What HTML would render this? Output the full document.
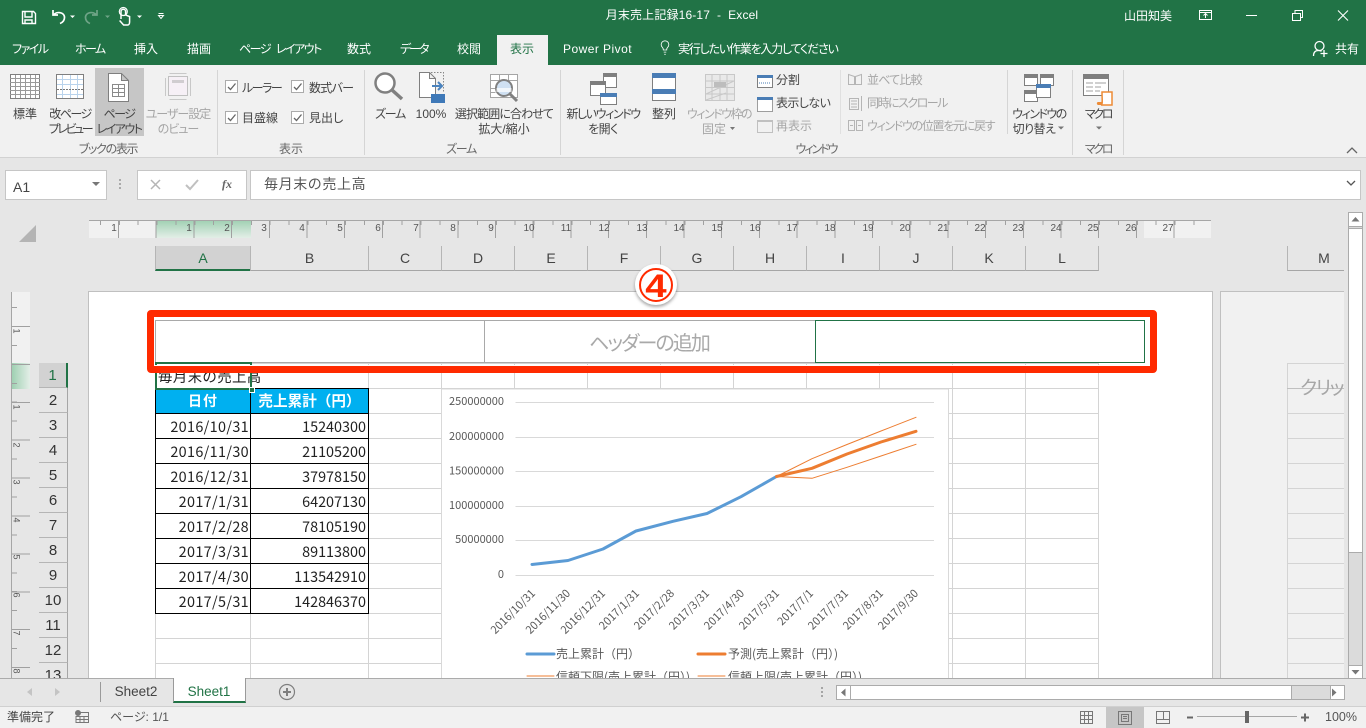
<!DOCTYPE html>
<html lang="ja"><head><meta charset="utf-8"><title>月末売上記録16-17 - Excel</title>
<style>
html,body{margin:0;padding:0;width:1366px;height:728px;overflow:hidden;background:#e6e6e6}
body{position:relative;font-family:"Liberation Sans","Noto Sans CJK JP",sans-serif;font-feature-settings:"palt";color:#444;font-size:12px}
div,span,svg{position:absolute}
.t{white-space:nowrap;line-height:14px;height:14px}
.c{transform:translateX(-50%)}
.w{color:#fff}.g{color:#a6a6a6}
.n{font-family:"Noto Sans CJK JP",sans-serif;font-feature-settings:normal;font-size:14.4px;color:#222;line-height:24px;height:24px;white-space:nowrap}
.d{letter-spacing:.35px}
.ch{top:246px;height:24px;border-bottom:1px solid #a6a6a6;border-left:1px solid #b5b5b5;text-align:center;line-height:24px;font-size:14px;color:#444;box-sizing:content-box}
.rh{left:39px;width:28px;height:24px;border-bottom:1px solid #b5b5b5;border-right:1px solid #a6a6a6;text-align:center;line-height:26px;font-size:15px;color:#333}
.rl{left:89px;top:223px;font-size:10px;color:#555;line-height:11px;transform:translateX(-50%)}
.vl{left:14px;font-size:9px;color:#555;line-height:10px;transform:rotate(90deg)}
</style></head><body>
<!-- title & tabs -->
<div style="left:0;top:0;width:1366px;height:65px;background:#217346"></div>
<div style="left:497px;top:35px;width:51px;height:30px;background:#f1f1f1"></div>
<div style="left:0;top:65px;width:1366px;height:92px;background:#f1f1f1"></div>
<div style="left:0;top:157px;width:1366px;height:1px;background:#d2d2d2"></div>
<div class="t w c" style="left:682px;top:8px;letter-spacing:.15px">月末売上記録16-17&nbsp;&nbsp;-&nbsp;&nbsp;Excel</div>
<div class="t w" style="left:1124px;top:9px">山田知美</div>
<div class="t w" style="left:12px;top:42px;letter-spacing:-1.5px">ファイル</div>
<div class="t w" style="left:75px;top:42px;letter-spacing:-1.6px">ホーム</div>
<div class="t w" style="left:134px;top:42px">挿入</div>
<div class="t w" style="left:187px;top:42px">描画</div>
<div class="t w" style="left:239px;top:42px;letter-spacing:-1.5px;word-spacing:4px">ページ レイアウト</div>
<div class="t w" style="left:347px;top:42px">数式</div>
<div class="t w" style="left:400px;top:42px;letter-spacing:-2px">データ</div>
<div class="t w" style="left:457px;top:42px">校閲</div>
<div class="t" style="left:510px;top:42px;color:#217346">表示</div>
<div class="t w" style="left:563px;top:42px;letter-spacing:.45px">Power Pivot</div>
<div class="t w" style="left:678px;top:42px;letter-spacing:-1.2px">実行したい作業を入力してください</div>
<div class="t w" style="left:1335px;top:42px">共有</div>
<svg style="left:0;top:0" width="1366" height="65" fill="none" stroke="#fff">
<path d="M22.5 11.5h11l2 2v10h-13zM25 12v5h7v-5M25 24v-4h7v4" stroke-width="1.4"/>
<path d="M53 10v5h5M53.5 15c3-4 11-3 11 2.5 0 3-2 5-4.5 6" stroke-width="1.7"/>
<path d="M70 15.5h5l-2.500 2.500z" fill="#fff" stroke="none"/>
<path d="M97 10v5h-5M96.500 15c-3-4-11-3-11 2.500 0 3 2 5 4.500 6" stroke="#6fa487" stroke-width="1.700"/>
<path d="M105 15.500h5l-2.500 2.500z" fill="#6fa487" stroke="none"/>
<path d="M121 19v-7.500a2.300 2.300 0 0 1 4.600 0V15l4 1.500V22c0 2-1 3-2 3h-4l-4-4.500" stroke-width="1.500"/><circle cx="123.300" cy="11.500" r="4" stroke-width="1.200"/>
<path d="M137 15.500h5l-2.500 2.500z" fill="#fff" stroke="none"/>
<path d="M158.500 13.500h5M158.500 15.500h5l-2.500 3z" stroke-width="1"/>
<rect x="1199.500" y="10.500" width="12" height="9"/><path d="M1199.500 12.500h12M1205.500 18v-4M1203.500 15.500l2-2 2 2"/>
<path d="M1246 15.500h11"/>
<path d="M1292.500 13.500h8v7h-8zM1295 13.500v-3h7.500v7h-2"/>
<path d="M1338 10.500l10 10M1348 10.500l-10 10" stroke-width="1.100"/>
<g transform="translate(0,3) translate(665,47) scale(.85) translate(-665,-47)"><path d="M668 44a4.500 4.500 0 1 0-6 0c1 1 1 2 1 3h4c0-1 0-2 1-3zM663.500 49.500h3M664 52h2" stroke-width="1"/></g>
<circle cx="1319.500" cy="46" r="4.500" stroke-width="1.300"/><path d="M1313.500 56c0-4 2-5.500 5-5.500 1 0 2 .2 3 .8M1320.500 53.500h7M1324 50v7" stroke-width="1.300"/>
</svg>

<!-- ribbon selected -->
<div style="left:95px;top:68px;width:49px;height:68px;background:#c6c6c6"></div>
<!-- ribbon separators -->
<div style="left:217px;top:70px;width:1px;height:85px;background:#d5d5d5"></div>
<div style="left:364px;top:70px;width:1px;height:85px;background:#d5d5d5"></div>
<div style="left:560px;top:70px;width:1px;height:85px;background:#d5d5d5"></div>
<div style="left:1007px;top:70px;width:1px;height:64px;background:#d5d5d5"></div>
<div style="left:840px;top:70px;width:1px;height:64px;background:#e0e0e0"></div>
<div style="left:1072px;top:70px;width:1px;height:85px;background:#d5d5d5"></div>
<div style="left:1123px;top:70px;width:1px;height:85px;background:#d5d5d5"></div>

<!-- ribbon labels -->
<div class="t c" style="left:25px;top:107px">標準</div>
<div class="t c" style="left:70px;top:107px;letter-spacing:-1.5px">改ページ</div><div class="t c" style="left:70px;top:122px;letter-spacing:-2.4px">プレビュー</div>
<div class="t c" style="left:119px;top:107px;letter-spacing:-1.5px">ページ</div><div class="t c" style="left:119px;top:122px;letter-spacing:-1.5px">レイアウト</div>
<div class="t c g" style="left:178px;top:107px;letter-spacing:-1px">ユーザー設定</div><div class="t c g" style="left:178px;top:122px;letter-spacing:-1px">のビュー</div>
<div class="t c" style="left:108px;top:142px;color:#666;letter-spacing:-1.3px">ブックの表示</div>
<div class="t" style="left:242px;top:81px;letter-spacing:-1.5px">ルーラー</div>
<div class="t" style="left:309px;top:81px;letter-spacing:-.7px">数式バー</div>
<div class="t" style="left:242px;top:111px">目盛線</div>
<div class="t" style="left:309px;top:111px">見出し</div>
<div class="t c" style="left:291px;top:142px;color:#666">表示</div>
<div class="t c" style="left:390px;top:107px;letter-spacing:-1.3px">ズーム</div>
<div class="t c" style="left:431px;top:107px">100%</div>
<div class="t c" style="left:504px;top:107px;letter-spacing:-.9px">選択範囲に合わせて</div><div class="t c" style="left:504px;top:122px">拡大/縮小</div>
<div class="t c" style="left:461px;top:142px;color:#666;letter-spacing:-1.3px">ズーム</div>
<div class="t c" style="left:603px;top:107px;letter-spacing:-1.4px">新しいウィンドウ</div><div class="t c" style="left:603px;top:122px;letter-spacing:-.5px">を開く</div>
<div class="t c" style="left:664px;top:107px">整列</div>
<div class="t c g" style="left:719px;top:107px;letter-spacing:-1.5px">ウィンドウ枠の</div><div class="t c g" style="left:714px;top:122px">固定</div>
<div class="t" style="left:776px;top:73px">分割</div>
<div class="t" style="left:776px;top:96px;letter-spacing:-.6px">表示しない</div>
<div class="t g" style="left:776px;top:119px">再表示</div>
<div class="t g" style="left:867px;top:73px;letter-spacing:-.8px">並べて比較</div>
<div class="t g" style="left:867px;top:96px;letter-spacing:-1.5px">同時にスクロール</div>
<div class="t g" style="left:867px;top:119px;letter-spacing:-1.3px">ウィンドウの位置を元に戻す</div>
<div class="t c" style="left:816px;top:142px;color:#666;letter-spacing:-2px">ウィンドウ</div>
<div class="t c" style="left:1039px;top:107px;letter-spacing:-1.5px">ウィンドウの</div><div class="t c" style="left:1034px;top:122px;letter-spacing:-.5px">切り替え</div>
<div class="t c" style="left:1098px;top:107px;letter-spacing:-2.300px">マクロ</div>
<div class="t c" style="left:1098px;top:142px;color:#666;letter-spacing:-2.300px">マクロ</div>

<!-- ribbon icons -->
<svg style="left:0;top:65px" width="1366" height="92" fill="none" stroke="#7f7f7f">
<g transform="translate(0,-65)">
<rect x="10.500" y="74.500" width="29" height="24" fill="#fff" stroke="#7f7f7f"/>
<path d="M10 78.500h30M10 82.500h30M10 86.500h30M10 90.500h30M10 94.500h30M15.500 75v23M20.500 75v23M25.500 75v23M30.500 75v23M35.500 75v23" stroke="#9a9a9a"/>
<rect x="56.500" y="74.500" width="27" height="24" fill="#fff"/>
<path d="M57 79.500h26M57 84.500h26M57 94.500h26M62.500 75v23M70.500 75v23M77.500 75v23" stroke="#b9d3ec"/>
<path d="M57 89.500h26" stroke="#777" stroke-dasharray="2 1"/>
<path d="M108.500 73.500h13l7 7v21h-20zM121.500 73.500v7h7" fill="#fff" stroke-width="1"/>
<path d="M112.500 84.500h12v12h-12zM112.500 88.500h12M112.500 92.500h12M118.500 84.500v12" stroke="#8a8a8a"/>
<path d="M169.500 73.500h17M165.500 78v18M190.500 78v18M169.500 99.500h17" stroke="#c8c8c8"/>
<rect x="168.500" y="76.500" width="19" height="19" fill="#f6f0f6" stroke="#c0c0c0"/>
<rect x="172" y="80" width="12" height="3" fill="#d0cdd0" stroke="none"/>
<g fill="#fff" stroke="#ababab"><rect x="225.500" y="80.500" width="12" height="12"/><rect x="291.500" y="80.500" width="12" height="12"/><rect x="225.500" y="111.500" width="12" height="12"/><rect x="291.500" y="111.500" width="12" height="12"/></g>
<g stroke="#666" stroke-width="1.300"><path d="M228 87l2.500 2.500 5-6M294 87l2.500 2.500 5-6M228 118l2.500 2.500 5-6M294 118l2.500 2.500 5-6"/></g>
<circle cx="385" cy="83" r="9.500" stroke="#808080" stroke-width="2.500" fill="#fff"/>
<path d="M392 90l10 9" stroke="#808080" stroke-width="3.500"/>
<path d="M419.500 72.500h10l6 6v19h-16zM429.500 72.500v6h6" fill="#fff" stroke="#7f7f7f"/>
<path d="M431 72.500h12.500v20" stroke="#888" stroke-dasharray="1.500 1.500"/>
<path d="M432 86h9M438 82l4 4-4 4" stroke="#4a82bd" stroke-width="2"/>
<rect x="431" y="94" width="14" height="9" fill="#3f79b8" stroke="none"/>
<path d="M490.500 74.500h27v23h-27zM490.500 80.500h27M499.500 75v10M508.500 75v6M490.500 88.500h7M490.500 92.500h5" stroke="#a5a5a5" fill="#fff"/>
<circle cx="504" cy="88" r="8" fill="#cfe0f2" stroke="#808080" stroke-width="2"/><path d="M496.500 88h15v4h-15z" fill="#fff" stroke="none" opacity=".7"/>
<path d="M510 94l7 7" stroke="#808080" stroke-width="3"/>
<g stroke="#7f7f7f"><rect x="603.500" y="73.500" width="13" height="14" fill="#fff"/><rect x="603" y="73" width="14" height="4" fill="#7f7f7f" stroke="none"/>
<rect x="590.500" y="81.500" width="15" height="14" fill="#fff"/><rect x="590" y="81" width="16" height="4" fill="#7f7f7f" stroke="none"/>
<rect x="600.500" y="93.500" width="16" height="11" fill="#fff"/><rect x="600" y="93" width="17" height="4" fill="#4a7db5" stroke="none"/></g>
<rect x="652.500" y="73.500" width="23" height="27" fill="#fff" stroke="#7f7f7f"/>
<rect x="652" y="73" width="24" height="5" fill="#4a7db5" stroke="none"/><rect x="652" y="89" width="24" height="5" fill="#4a7db5" stroke="none"/>
<rect x="705.500" y="74.500" width="29" height="26" fill="#e9e9e9" stroke="#c8c8c8"/>
<path d="M705 81h30M705 87.500h30M705 94h30M712 75v26M720 75v26M727 75v26M706 94l28-13M706 100l20-7" stroke="#c8c8c8"/>
<rect x="714" y="82" width="12" height="5" fill="#bdbdbd" stroke="none"/>
<rect x="757.500" y="75.500" width="15" height="12" fill="#fff" stroke="#7f7f7f"/><rect x="757" y="75" width="16" height="3" fill="#4a7db5" stroke="none"/><path d="M759 83h12" stroke="#4a7db5" stroke-dasharray="1 1"/>
<rect x="757.500" y="98.500" width="15" height="13" fill="#fff" stroke="#444" stroke-dasharray="1 1"/><rect x="757" y="97" width="16" height="3" fill="#4a7db5" stroke="none"/>
<rect x="757.500" y="120.500" width="15" height="12" fill="#f1f1f1" stroke="#c0c0c0"/><rect x="757" y="120" width="16" height="2" fill="#c0c0c0" stroke="none"/>
<g stroke="#b5b5b5"><path d="M848.500 74.500l6 2v8h-6zM855.500 76.500l6-2v10h-6z"/><path d="M849.500 98.500h9v11h-9zM851 101h6M851 104h6M851 107h6M861.500 96v15"/><path d="M848.500 120.500h6v10h-6zM856.500 120.500h6v10h-6zM850 125.500h3M858 125.500h3"/></g>
<g><rect x="1024.500" y="74.500" width="13" height="11" fill="#fff"/><rect x="1024" y="74" width="14" height="4" fill="#7f7f7f" stroke="none"/>
<rect x="1040.500" y="74.500" width="13" height="11" fill="#fff"/><rect x="1040" y="74" width="14" height="4" fill="#7f7f7f" stroke="none"/>
<rect x="1024.500" y="90.500" width="13" height="11" fill="#fff"/><rect x="1024" y="90" width="14" height="4" fill="#7f7f7f" stroke="none"/>
<rect x="1036.500" y="84.500" width="14" height="13" fill="#fff"/><rect x="1036" y="84" width="15" height="4" fill="#4a7db5" stroke="none"/></g>
<rect x="1083.500" y="74.500" width="25" height="21" fill="#fff"/><rect x="1083" y="74" width="26" height="5" fill="#7f7f7f" stroke="none"/>
<path d="M1086 83h7M1086 87h7M1086 91h7M1095 83h11M1095 87h6M1095 91h5" stroke="#a0a0a0"/>
<path d="M1102 92h10v13h-11c2-1 1-5 1-13z" fill="#fff" stroke="#ed8b36" stroke-width="1.500"/><path d="M1101 105h-3c-2-1-1-3 0-3h5z" fill="#ed8b36" stroke="none"/>
<path d="M730 127h5l-2.500 3zM1058 126.500h6l-3 3zM1096 126.500h6l-3 3z" fill="#777" stroke="none"/>
<path d="M1347 153l5-5 5 5" stroke="#666" stroke-width="1.300"/>
</g>
</svg>

<!-- formula bar -->
<div style="left:5px;top:170px;width:100px;height:28px;background:#fff;border:1px solid #c6c6c6"></div>
<div class="t" style="left:13px;top:180px;font-size:14px;color:#444">A1</div>
<svg style="left:90px;top:180px" width="12" height="8"><path d="M2 2h8l-4 4z" fill="#777"/></svg>
<svg style="left:118px;top:178px" width="6" height="14" fill="#aaa"><rect x="1" y="1" width="2" height="2"/><rect x="1" y="5" width="2" height="2"/><rect x="1" y="9" width="2" height="2"/></svg>
<div style="left:137px;top:170px;width:108px;height:28px;background:#fff;border:1px solid #c6c6c6"></div>
<svg style="left:140px;top:172px" width="105" height="24" fill="none"><path d="M11 8l9 9M20 8l-9 9" stroke="#b5b5b5" stroke-width="1.500"/><path d="M46 13l4 4 8-9" stroke="#c0c0c0" stroke-width="2"/></svg>
<div class="t" style="left:222px;top:177px;font:italic bold 12px 'Liberation Serif',serif;color:#666">fx</div>
<div style="left:250px;top:170px;width:1109px;height:28px;background:#fff;border:1px solid #c6c6c6"></div>
<div class="t" style="left:264px;top:177px;font-size:14px;letter-spacing:.6px;color:#555;font-feature-settings:normal">毎月末の売上高</div>
<svg style="left:1345px;top:180px" width="12" height="8"><path d="M2 1l4 4 4-4" stroke="#555" fill="none" stroke-width="1.300"/></svg>

<!-- corner -->
<svg style="left:19px;top:225px" width="18" height="18"><path d="M17 0v17H0z" fill="#b4b4b4"/></svg>

<!-- horizontal ruler -->
<div style="left:89px;top:220px;width:1122px;height:18px;background:#e6e6e6"></div>
<div style="left:89px;top:220px;width:67px;height:18px;background:#f1f1f1"></div>
<div style="left:1144px;top:220px;width:67px;height:18px;background:#f1f1f1"></div>
<div style="left:156px;top:220px;width:95px;height:18px;background:linear-gradient(#9fd0b2,#e3eee7)"></div>
<div style="left:89px;top:220px;width:1122px;height:18px;background:linear-gradient(#a6a6a6,#a6a6a6) 0 0/100% 1px no-repeat,repeating-linear-gradient(90deg,transparent 0 29px,#a0a0a0 29px 30px,transparent 30px 37.7px)"></div>
<div style="left:100px;top:221px;width:1111px;height:4px;background:repeating-linear-gradient(90deg,#a0a0a0 0 1px,transparent 1px 18.85px)"></div>
<span class="rl" style="left:114px">1</span><span class="rl" style="left:189px">1</span><span class="rl" style="left:227px">2</span><span class="rl" style="left:264px">3</span><span class="rl" style="left:302px">4</span><span class="rl" style="left:340px">5</span><span class="rl" style="left:378px">6</span><span class="rl" style="left:416px">7</span><span class="rl" style="left:453px">8</span><span class="rl" style="left:491px">9</span><span class="rl" style="left:529px">10</span><span class="rl" style="left:566px">11</span><span class="rl" style="left:604px">12</span><span class="rl" style="left:642px">13</span><span class="rl" style="left:679px">14</span><span class="rl" style="left:717px">15</span><span class="rl" style="left:755px">16</span><span class="rl" style="left:792px">17</span><span class="rl" style="left:830px">18</span><span class="rl" style="left:868px">19</span><span class="rl" style="left:905px">20</span><span class="rl" style="left:943px">21</span><span class="rl" style="left:980px">22</span><span class="rl" style="left:1018px">23</span><span class="rl" style="left:1056px">24</span><span class="rl" style="left:1093px">25</span><span class="rl" style="left:1131px">26</span><span class="rl" style="left:1168px">27</span>

<!-- column headers -->
<div class="ch" style="left:155px;width:94px;background:#d2d2d2;border-bottom:2px solid #217346;height:23px;color:#217346">A</div>
<div class="ch" style="left:250px;width:117px">B</div>
<div class="ch" style="left:368px;width:72px">C</div>
<div class="ch" style="left:441px;width:72px">D</div>
<div class="ch" style="left:514px;width:72px">E</div>
<div class="ch" style="left:587px;width:72px">F</div>
<div class="ch" style="left:660px;width:72px">G</div>
<div class="ch" style="left:733px;width:72px">H</div>
<div class="ch" style="left:806px;width:72px">I</div>
<div class="ch" style="left:879px;width:72px">J</div>
<div class="ch" style="left:952px;width:72px">K</div>
<div class="ch" style="left:1025px;width:72px;border-right:1px solid #b5b5b5">L</div>
<div class="ch" style="left:1287px;width:72px">M</div>

<!-- vertical ruler -->
<div style="left:11px;top:292px;width:19px;height:386px;background:#e6e6e6;border-left:1px solid #a6a6a6"></div>
<div style="left:12px;top:292px;width:18px;height:71px;background:#f1f1f1"></div>
<div style="left:12px;top:363px;width:18px;height:26px;background:linear-gradient(90deg,#9fd0b2,#e3eee7)"></div>
<div style="left:12px;top:326px;width:18px;height:352px;background:repeating-linear-gradient(180deg,#a0a0a0 0 1px,transparent 1px 37.9px)"></div>
<div style="left:12px;top:307px;width:5px;height:371px;background:repeating-linear-gradient(180deg,#a0a0a0 0 1px,transparent 1px 18.95px)"></div>
<span class="vl" style="top:326px">1</span><span class="vl" style="top:402px">1</span><span class="vl" style="top:440px">2</span><span class="vl" style="top:477px">3</span><span class="vl" style="top:515px">4</span><span class="vl" style="top:552px">5</span><span class="vl" style="top:590px">6</span><span class="vl" style="top:628px">7</span><span class="vl" style="top:666px">8</span>

<!-- row headers -->
<div class="rh" style="top:363px;background:#d2d2d2;width:27px;border-right:2px solid #217346;color:#217346">1</div>
<div class="rh" style="top:388px">2</div><div class="rh" style="top:413px">3</div><div class="rh" style="top:438px">4</div><div class="rh" style="top:463px">5</div><div class="rh" style="top:488px">6</div><div class="rh" style="top:513px">7</div><div class="rh" style="top:538px">8</div><div class="rh" style="top:563px">9</div><div class="rh" style="top:588px">10</div><div class="rh" style="top:613px">11</div><div class="rh" style="top:638px">12</div><div class="rh" style="top:663px">13</div>

<!-- page -->
<div style="left:88px;top:291px;width:1123px;height:400px;background:#fff;border:1px solid #c0c0c0"></div>
<div style="left:1220px;top:291px;width:130px;height:400px;background:#f1f1f1;border:1px solid #c0c0c0"></div>
<svg style="left:0;top:0" width="1366" height="728" fill="none" stroke="#d4d4d4">
<path d="M155.500 363v320M250.500 363v320M368.500 363v320M441.500 363v320M514.500 363v320M587.500 363v320M660.500 363v320M733.500 363v320M806.500 363v320M879.500 363v320M952.500 363v320M1025.500 363v320M1098.500 363v320M155 363.500h944M155 388.500h944M155 413.500h944M155 438.500h944M155 463.500h944M155 488.500h944M155 513.500h944M155 538.500h944M155 563.500h944M155 588.500h944M155 613.500h944M155 638.500h944M155 663.500h944"/>
<path d="M1287.500 363v320M1287 363.500h60M1287 413.500h60M1287 438.500h60M1287 463.500h60M1287 488.500h60M1287 513.500h60M1287 538.500h60M1287 563.500h60M1287 588.500h60M1287 613.500h60M1287 638.500h60M1287 663.500h60" />
<path d="M1287 388.500h60" stroke="#c0c0c0"/>
</svg>
<div style="left:1300px;top:376px;width:44px;height:28px;overflow:hidden"><span class="t" style="left:0;top:2px;font-size:19px;line-height:22px;height:22px;color:#a6a6a6;letter-spacing:-1.5px">クリック</span></div>
<div style="left:1344px;top:240px;width:22px;height:438px;background:#e6e6e6"></div>

<!-- table -->
<div style="left:156px;top:389px;width:212px;height:24px;background:#00b0f0"></div>
<svg style="left:0;top:0" width="1366" height="728" stroke="#000" fill="none"><path d="M155.500 388v226M250.500 388v226M368.500 388v226M155 388.500h214M155 413.500h214M155 438.500h214M155 463.500h214M155 488.500h214M155 513.500h214M155 538.500h214M155 563.500h214M155 588.500h214M155 613.500h214"/></svg>
<div class="n" style="left:156px;width:94px;top:389px;text-align:center;color:#fff;font-weight:bold;font-size:14px;letter-spacing:1px">日付</div>
<div class="n" style="left:251px;width:117px;top:389px;text-align:center;color:#fff;font-weight:bold;font-size:14.600px">売上累計（円）</div>
<div class="n d" style="right:1117px;top:415px">2016/10/31</div><div class="n" style="right:1000px;top:415px">15240300</div>
<div class="n d" style="right:1117px;top:440px">2016/11/30</div><div class="n" style="right:1000px;top:440px">21105200</div>
<div class="n d" style="right:1117px;top:465px">2016/12/31</div><div class="n" style="right:1000px;top:465px">37978150</div>
<div class="n d" style="right:1117px;top:490px">2017/1/31</div><div class="n" style="right:1000px;top:490px">64207130</div>
<div class="n d" style="right:1117px;top:515px">2017/2/28</div><div class="n" style="right:1000px;top:515px">78105190</div>
<div class="n d" style="right:1117px;top:540px">2017/3/31</div><div class="n" style="right:1000px;top:540px">89113800</div>
<div class="n d" style="right:1117px;top:565px">2017/4/30</div><div class="n" style="right:1000px;top:565px">113542910</div>
<div class="n d" style="right:1117px;top:590px">2017/5/31</div><div class="n" style="right:1000px;top:590px">142846370</div>
<div class="n" style="left:158px;top:365px;font-size:14.500px;letter-spacing:.3px">毎月末の売上高</div>

<!-- chart -->
<svg style="left:441px;top:389px;font-feature-settings:normal" width="508" height="289" viewBox="441 389 508 289" font-family="'Noto Sans CJK JP',sans-serif" font-size="11" fill="#595959">
<rect x="441.500" y="389" width="507" height="300" fill="#fff" stroke="#d9d9d9"/>
<g stroke="#d9d9d9" fill="none"><path d="M515.500 402.500H934M515.500 437.500H934M515.500 471.500H934M515.500 506.500H934M515.500 540.500H934M515.500 575.500H934"/></g>
<g text-anchor="end"><text x="504" y="405">250000000</text><text x="504" y="440">200000000</text><text x="504" y="474.500">150000000</text><text x="504" y="509">100000000</text><text x="504" y="543">50000000</text><text x="504" y="578">0</text></g>
<g text-anchor="end">
<text transform="translate(536,594) rotate(-45)">2016/10/31</text>
<text transform="translate(571,594) rotate(-45)">2016/11/30</text>
<text transform="translate(606,594) rotate(-45)">2016/12/31</text>
<text transform="translate(640,594) rotate(-45)">2017/1/31</text>
<text transform="translate(675,594) rotate(-45)">2017/2/28</text>
<text transform="translate(710,594) rotate(-45)">2017/3/31</text>
<text transform="translate(745,594) rotate(-45)">2017/4/30</text>
<text transform="translate(780,594) rotate(-45)">2017/5/31</text>
<text transform="translate(814,594) rotate(-45)">2017/7/1</text>
<text transform="translate(849,594) rotate(-45)">2017/7/31</text>
<text transform="translate(884,594) rotate(-45)">2017/8/31</text>
<text transform="translate(919,594) rotate(-45)">2017/9/30</text>
</g>
<g fill="none" stroke-linejoin="round" stroke-linecap="round">
<polyline points="776.500,476.500 812,458.700 847,444.500 881,431 916,417.300" stroke="#ed7d31" stroke-width="1"/>
<polyline points="776.500,476.500 812,478.300 847,467.300 881,456 916,444.300" stroke="#ed7d31" stroke-width="1"/>
<polyline points="532,564.500 568,560.500 603,549 636,531 673,521.300 707,513.500 741,496.700 776.500,476.500" stroke="#5b9bd5" stroke-width="3"/>
<polyline points="776.500,476.500 812,468.300 847,454 881,442 916,431.300" stroke="#ed7d31" stroke-width="3"/>
<path d="M527 654h27" stroke="#5b9bd5" stroke-width="3"/><path d="M698 654h27" stroke="#ed7d31" stroke-width="3"/>
<path d="M527 676h27M698 676h27" stroke="#ed7d31"/>
</g>
<g font-size="12">
<text x="556" y="658">売上累計（円）</text>
<text x="728" y="658">予測(売上累計（円）)</text>
<text x="556" y="681">信頼下限(売上累計（円）)</text>
<text x="728" y="681">信頼上限(売上累計（円）)</text>
</g>
</svg>

<!-- header boxes -->
<div style="left:155px;top:320px;width:990px;height:43px;background:#fff;box-sizing:border-box;border:1px solid #a9a9a9"></div>
<div style="left:484px;top:320px;width:1px;height:43px;background:#a9a9a9"></div>
<div style="left:815px;top:320px;width:330px;height:43px;box-sizing:border-box;border:1px solid #217346;background:#fff"></div>
<div class="t c" style="left:649px;top:332px;font-size:20px;line-height:24px;height:24px;color:#a9a9a9;letter-spacing:-1.9px">ヘッダーの追加</div>
<!-- selection -->
<div style="left:155px;top:362px;width:93px;height:24px;border:2px solid #217346"></div>
<div style="left:249px;top:387px;width:4px;height:4px;background:#217346;border:1px solid #fff"></div>
<div style="left:147px;top:310px;width:1010px;height:63px;box-sizing:border-box;border:7px solid #ff2a00;border-radius:4px;box-shadow:inset 0 0 0 1px #fff"></div>
<!-- circled number -->
<div style="left:635px;top:264px;width:42px;height:41px;border-radius:50%;background:#fff;box-shadow:0 2px 3px rgba(0,0,0,.35)"></div>
<div style="left:639px;top:268px;width:34px;height:34px;box-sizing:border-box;border-radius:50%;border:2px solid #ff2a00"></div>
<div style="left:639px;top:268px;width:34px;height:36px;line-height:36px;text-align:center;font-size:32px;font-weight:bold;color:#ff2a00;font-family:'Liberation Sans',sans-serif;transform:scaleX(1.2)">4</div>

<!-- vertical scrollbar -->
<div style="left:1348px;top:212px;width:15px;height:468px;background:#dbdbdb;border:0;box-shadow:inset 0 0 0 1px #ababab"></div>
<div style="left:1348px;top:228px;width:15px;height:325px;background:#fff;box-sizing:border-box;border:1px solid #ababab"></div>
<div style="left:1348px;top:212px;width:15px;height:15px;background:#fff;box-sizing:border-box;border:1px solid #ababab"></div>
<div style="left:1348px;top:665px;width:15px;height:15px;background:#fff;box-sizing:border-box;border:1px solid #ababab"></div>
<svg style="left:1348px;top:212px" width="15" height="468" fill="#777"><path d="M3.500 9.500h8l-4-4.500zM3.500 458h8l-4 4.500z"/></svg>

<!-- sheet tabs -->
<div style="left:0;top:678px;width:1366px;height:28px;background:#e6e6e6;border-top:1px solid #ababab;box-sizing:border-box"></div>
<div style="left:100px;top:682px;width:1px;height:20px;background:#9a9a9a"></div>
<svg style="left:24px;top:685px" width="40" height="14" fill="#c4c4c4"><path d="M8 3v8l-5-4zM31 3v8l5-4z"/></svg>
<div class="t c" style="left:136px;top:684px;font-size:13.500px;line-height:15px;color:#444">Sheet2</div>
<div style="left:173px;top:678px;width:73px;height:25px;background:#fff;border-left:1px solid #9a9a9a;border-right:1px solid #9a9a9a;border-bottom:2px solid #217346;box-sizing:border-box"></div>
<div class="t c" style="left:209px;top:684px;font-size:13.500px;line-height:15px;color:#217346">Sheet1</div>
<svg style="left:278px;top:683px" width="18" height="18" fill="none" stroke="#7f7f7f"><circle cx="9" cy="9" r="7.500" stroke-width="1.200"/><path d="M5 9h8M9 5v8" stroke-width="2"/></svg>
<svg style="left:820px;top:686px" width="5" height="14" fill="#a5a5a5"><rect x="1" y="1" width="2" height="2"/><rect x="1" y="5" width="2" height="2"/><rect x="1" y="9" width="2" height="2"/></svg>
<div style="left:836px;top:685px;width:494px;height:15px;background:#fff"></div>
<div style="left:1292px;top:685px;width:38px;height:15px;background:#dbdbdb"></div>
<div style="left:836px;top:685px;width:509px;height:15px;box-sizing:border-box;border:1px solid #ababab;border-right:0;border-left:0"></div>
<div style="left:836px;top:685px;width:15px;height:15px;background:#fff;box-sizing:border-box;border:1px solid #ababab"></div>
<div style="left:1291px;top:685px;width:1px;height:15px;background:#ababab"></div>
<div style="left:1330px;top:685px;width:15px;height:15px;background:#fff;box-sizing:border-box;border:1px solid #ababab"></div>
<svg style="left:836px;top:685px" width="510" height="15" fill="#777"><path d="M9.500 3.500v8l-4.500-4zM496 3.500v8l4.500-4z"/></svg>

<!-- status bar -->
<div style="left:0;top:706px;width:1366px;height:22px;background:#f1f1f1;border-top:1px solid #d0d0d0;box-sizing:border-box"></div>
<div class="t" style="left:7px;top:710px;color:#444;font-feature-settings:normal">準備完了</div>
<svg style="left:75px;top:710px" width="14" height="14" fill="none" stroke="#777"><circle cx="3" cy="3" r="2.500" fill="#777"/><path d="M5 2.500h8.500v10H1V6M1 6.500h12M1 9.500h12M5 6v6M9 6v6"/></svg>
<div class="t" style="left:110px;top:710px;color:#555">ページ: 1/1</div>
<div style="left:1106px;top:707px;width:38px;height:21px;background:#c6c6c6"></div>
<svg style="left:1060px;top:706px" width="306" height="22" fill="none" stroke="#777">
<path d="M20.500 5.500h12v12h-12zM20.500 9.500h12M20.500 13.500h12M24.500 5.500v12M28.500 5.500v12"/>
<path d="M58.500 5.500h13v13h-13zM61.500 8.500h7v7h-7zM63 10.500h4M63 12.500h4"/>
<path d="M96.500 5.500h13v12h-13zM96.500 13.500h13v4M103.500 5.500v8"/>
<path d="M127 11.500h6" stroke="#666" stroke-width="2"/>
<path d="M137 10.500h100" stroke="#a6a6a6"/>
<rect x="185" y="5" width="4" height="12" fill="#666" stroke="none"/>
<path d="M241 11.500h8M245 7.500v8" stroke="#666" stroke-width="2"/>
</svg>
<div class="t" style="left:1325px;top:710px;font-size:12.500px;color:#555">100%</div>
</body></html>
